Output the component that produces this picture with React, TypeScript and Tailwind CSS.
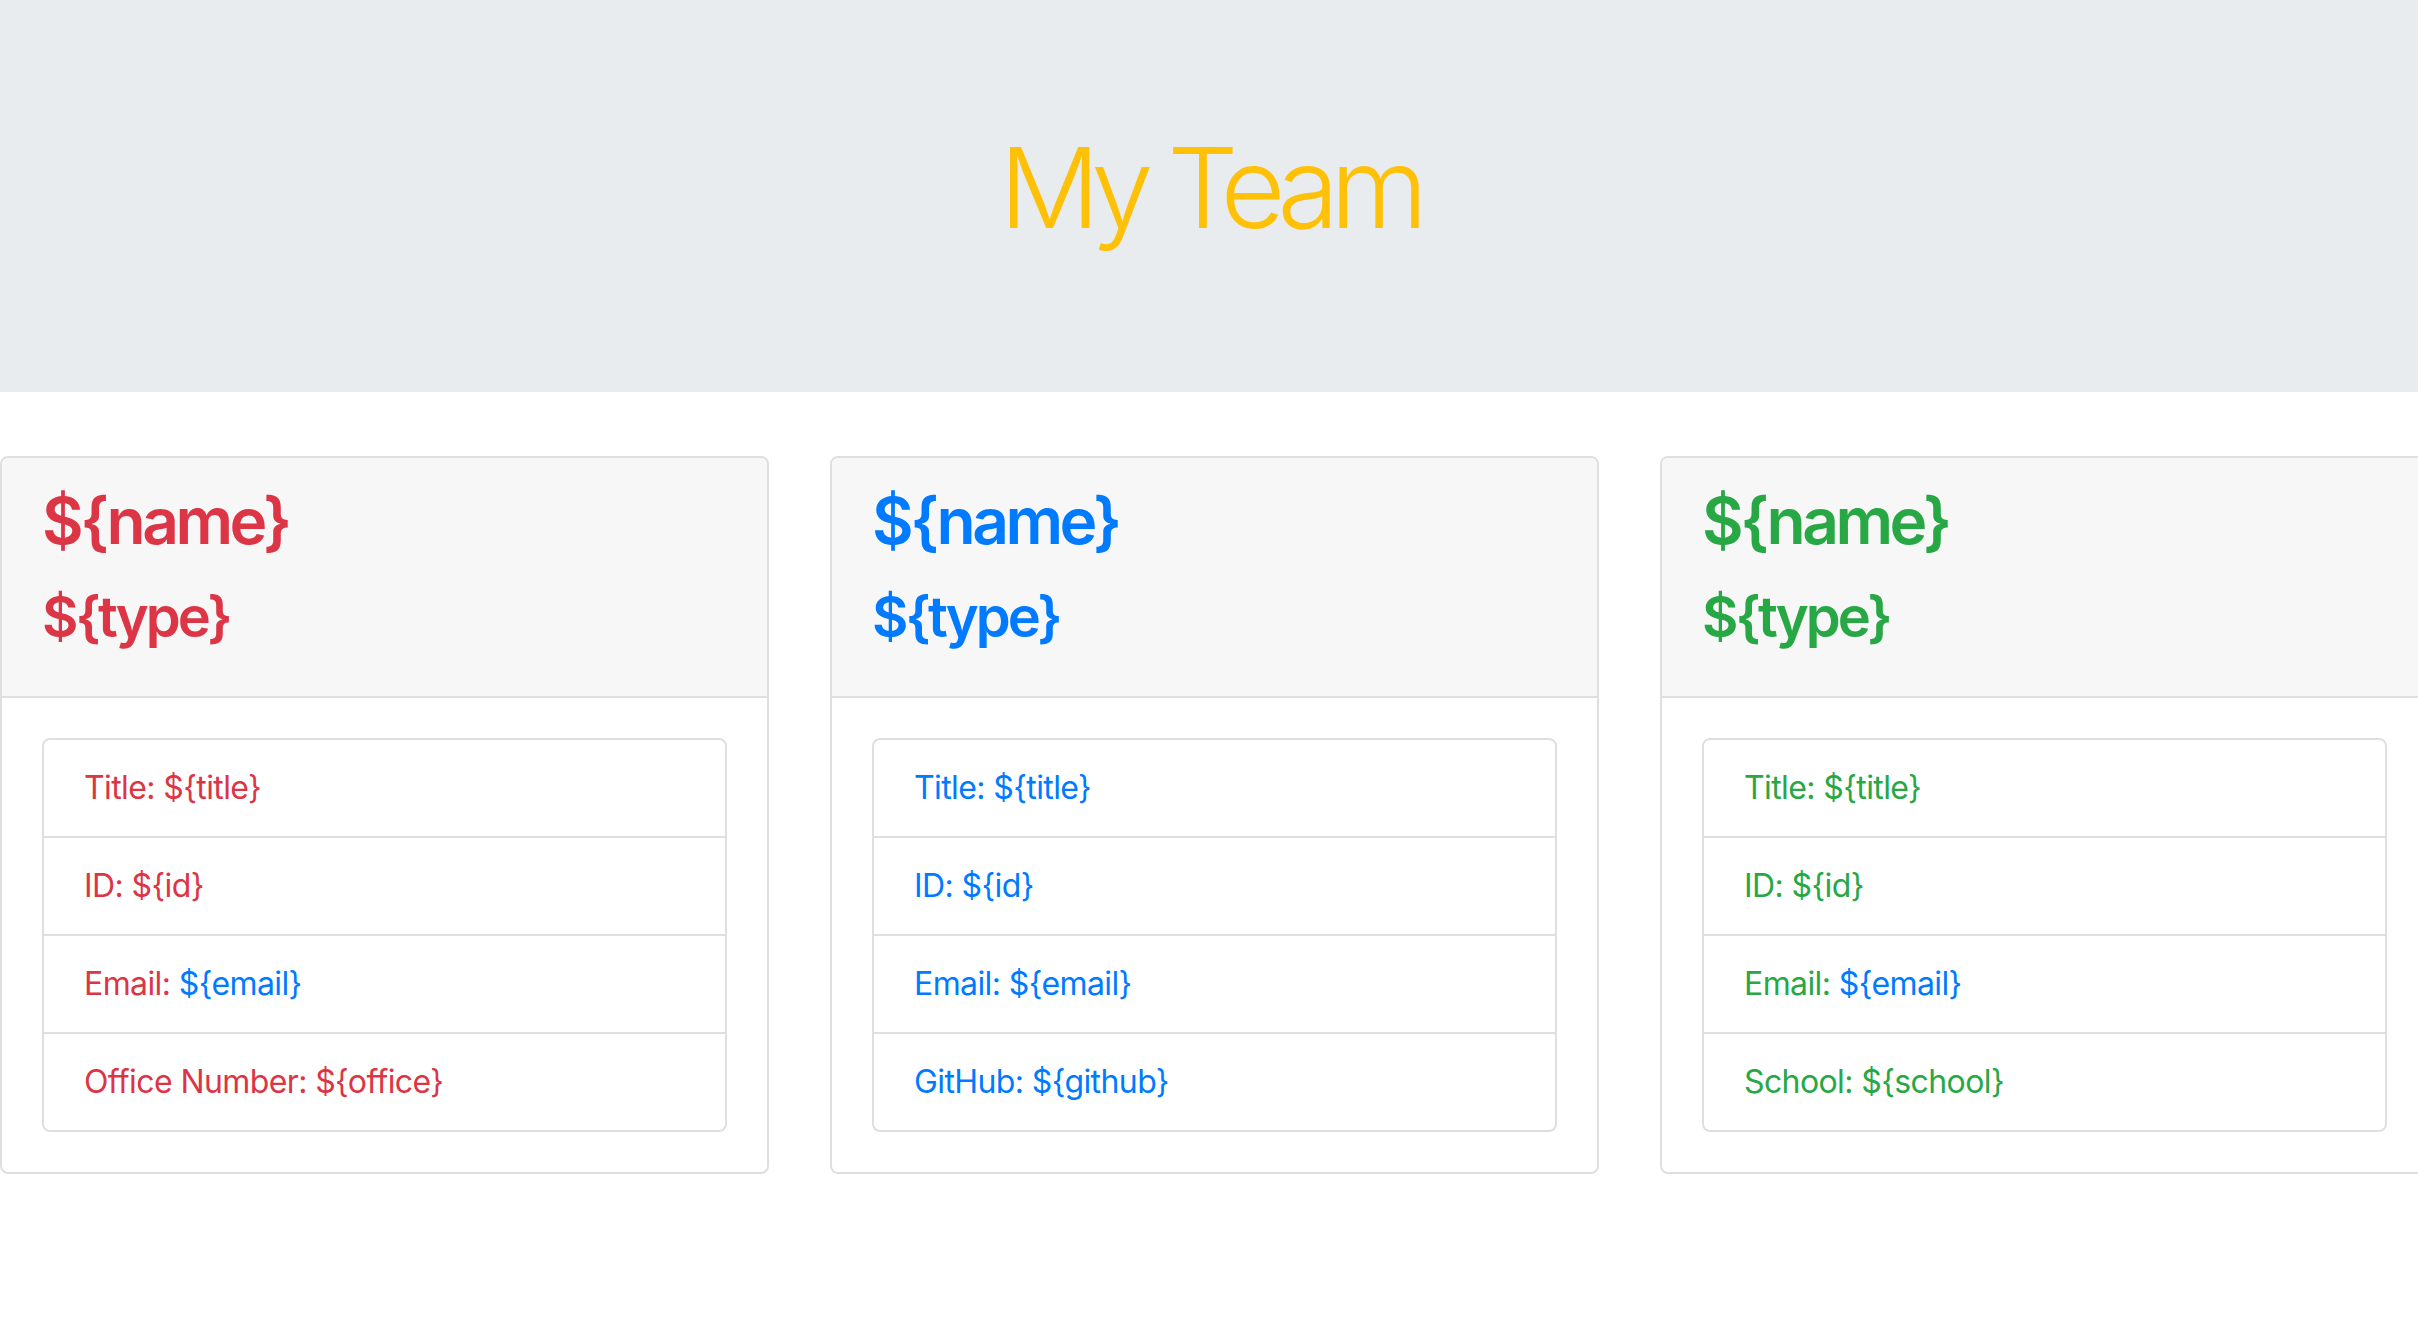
import React from 'react';

type Field = { label: string; value: string; link?: boolean };

type Member = {
  color: string;
  fields: Field[];
};

const members: Member[] = [
  {
    color: 'text-[#dc3545]',
    fields: [
      { label: 'Title', value: '${title}' },
      { label: 'ID', value: '${id}' },
      { label: 'Email', value: '${email}', link: true },
      { label: 'Office Number', value: '${office}' },
    ],
  },
  {
    color: 'text-[#007bff]',
    fields: [
      { label: 'Title', value: '${title}' },
      { label: 'ID', value: '${id}' },
      { label: 'Email', value: '${email}', link: true },
      { label: 'GitHub', value: '${github}' },
    ],
  },
  {
    color: 'text-[#28a745]',
    fields: [
      { label: 'Title', value: '${title}' },
      { label: 'ID', value: '${id}' },
      { label: 'Email', value: '${email}', link: true },
      { label: 'School', value: '${school}' },
    ],
  },
];

const MemberCard = ({ member }: { member: Member }) => (
  <div className={`w-[769px] shrink-0 rounded-[8px] border-2 border-[#dfdfdf] bg-white ${member.color}`}>
    {/* Card header */}
    <div className="bg-[#f7f7f7] border-b-2 border-[#dfdfdf] rounded-t-[6px] px-[40px] pt-[24px] pb-[45px]">
      <h2 className="text-[64px] leading-[77px] font-semibold tracking-[-3.5px] mb-[25px]">{'${name}'}</h2>
      <h3 className="text-[56px] leading-[67px] font-semibold tracking-[-3px]">{'${type}'}</h3>
    </div>

    {/* Card body */}
    <div className="p-[40px]">
      <ul className="rounded-[8px] border-2 border-[#dfdfdf]">
        {member.fields.map((f, idx) => (
          <li
            key={f.label}
            className={`px-[40px] py-[24px] text-[32px] leading-[48px] tracking-[-0.6px] ${idx > 0 ? 'border-t-2 border-[#dfdfdf]' : ''}`}
          >
            {f.label}:{' '}
            {f.link ? <a className="text-[#007bff]">{f.value}</a> : f.value}
          </li>
        ))}
      </ul>
    </div>
  </div>
);

export default function App() {
  return (
    <div className="min-h-screen w-full overflow-hidden bg-white font-['Inter','Noto_Sans',sans-serif]">
      {/* Jumbotron */}
      <div className="bg-[#e9ecef] pt-[119px] pb-[137px] mb-[64px]">
        <h1 className="text-center text-[112px] leading-[136px] font-light text-[#ffc107] tracking-[-9px]">
          My Team
        </h1>
      </div>

      <div className="flex gap-[61px]">
        {members.map((m, i) => (
          <MemberCard key={i} member={m} />
        ))}
      </div>
    </div>
  );
}
